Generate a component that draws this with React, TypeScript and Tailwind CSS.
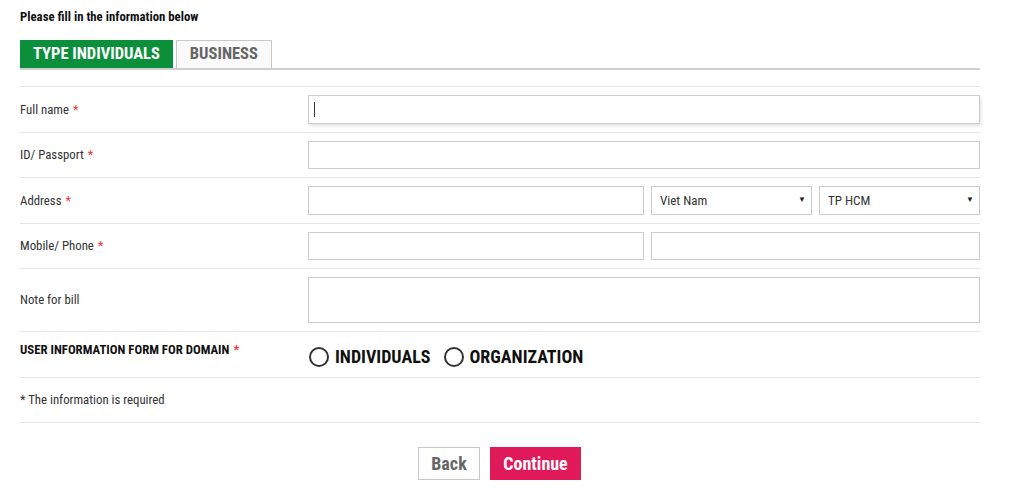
import { useState } from "react";

const font = { fontFamily: "'Roboto Condensed', 'Liberation Sans Narrow', Roboto, sans-serif" };

const Req = () => <span className="text-[#e53935] ml-1">*</span>;

const Row = ({ label, children }: { label: React.ReactNode; children?: React.ReactNode }) => (
  <div className="flex items-center border-t border-[#e6e6e6] py-2">
    <div className="w-[288px] shrink-0 text-[12.8px] text-[#333]">{label}</div>
    <div className="flex flex-1 gap-[7px]">{children}</div>
  </div>
);

const Input = ({ className = "" }: { className?: string }) => (
  <div className={`h-[28.5px] border border-[#cccccc] bg-white ${className}`} />
);

const Select = ({ value }: { value: string }) => (
  <div className="h-[28.5px] w-[161px] border border-[#cccccc] bg-white flex items-center justify-between pl-2 pr-[5px] text-[13px] text-[#333]">
    <span>{value}</span>
    <span className="text-[8px] text-[#222]">▼</span>
  </div>
);

const Radio = ({ label }: { label: string }) => (
  <div className="flex items-center gap-[6px]">
    <div className="w-[20px] h-[20px] rounded-full border-2 border-[#333] bg-white" />
    <span className="text-[18px] font-bold text-[#111]">{label}</span>
  </div>
);

export default function App() {
  const [tab, setTab] = useState("individual");
  const tabClass = (active: boolean) =>
    `h-[28px] px-[13px] text-[16.5px] font-bold ${active ? "bg-[#0b8f3a] text-white" : "bg-[#fafafa] text-[#666] border border-b-0 border-[#c8c8c8]"}`;
  return (
    <div className="w-[1024px] h-[501px] bg-white pl-5 pr-[44px] pt-[8px]" style={font}>
      <p className="text-[12.8px] font-bold text-[#111] leading-[17px]">Please fill in the information below</p>

      {/* Tabs */}
      <div className="mt-[15px] flex gap-[3px] border-b-2 border-[#cfcfcf]">
        <button onClick={() => setTab("individual")} className={tabClass(tab === "individual")}>
          TYPE INDIVIDUALS
        </button>
        <button onClick={() => setTab("business")} className={tabClass(tab === "business")}>
          BUSINESS
        </button>
      </div>

      <div className="mt-[16px]">
        <Row label={<>Full name<Req /></>}>
          <div className="h-[28.5px] flex-1 border border-[#cccccc] bg-white shadow-[1px_2px_3px_rgba(0,0,0,0.12)] flex items-center pl-[5px]">
            <span className="w-px h-[15px] bg-[#333]" />
          </div>
        </Row>
        <Row label={<>ID/ Passport<Req /></>}>
          <Input className="flex-1" />
        </Row>
        <Row label={<>Address<Req /></>}>
          <Input className="w-[336px]" />
          <Select value="Viet Nam" />
          <Select value="TP HCM" />
        </Row>
        <Row label={<>Mobile/ Phone<Req /></>}>
          <Input className="w-[336px]" />
          <Input className="flex-1" />
        </Row>
        <Row label="Note for bill">
          <div className="h-[46px] flex-1 border border-[#cccccc] bg-white" />
        </Row>
        <div className="flex items-center border-t border-[#e6e6e6] h-[46px]">
          <div className="w-[288px] shrink-0 text-[12.8px] font-bold text-[#111] -mt-[10px]">
            USER INFORMATION FORM FOR DOMAIN<Req />
          </div>
          <div className="flex items-center gap-[13px] pl-px pt-[4px]">
            <Radio label="INDIVIDUALS" />
            <Radio label="ORGANIZATION" />
          </div>
        </div>
        <div className="flex items-center border-t border-b border-[#e6e6e6] h-[46px] text-[12.8px] text-[#333]">
          * The information is required
        </div>
      </div>

      <div className="mt-[24px] flex justify-center gap-[10px] pr-[1px]">
        <button className="h-[33px] w-[62px] border border-[#c8c8c8] bg-white text-[18px] font-bold text-[#666]">Back</button>
        <button className="h-[33px] w-[91px] bg-[#e01a5a] text-[18px] font-bold text-white">Continue</button>
      </div>
    </div>
  );
}
